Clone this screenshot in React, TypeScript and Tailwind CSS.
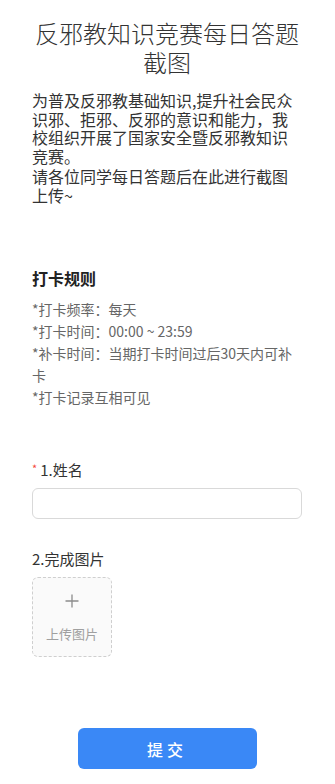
export default function App() {
  return (
    <div
      className="min-h-[784px] w-full bg-white pl-[32px] pr-[33px] pt-[18px] pb-[16px] text-[#333]"
      style={{ fontFamily: '"Noto Sans CJK SC", "Noto Sans", sans-serif' }}
    >
      {/* Title */}
      <h1 className="text-center text-[24px] leading-[29px] font-light text-[#333]">
        反邪教知识竞赛每日答题截图
      </h1>

      {/* Intro */}
      <div className="mt-[15px] text-[16px] leading-[18.5px] text-[#333]">
        <p>为普及反邪教基础知识,提升社会民众识邪、拒邪、反邪的意识和能力，我校组织开展了国家安全暨反邪教知识竞赛。</p>
        <p className="mt-[2px]">请各位同学每日答题后在此进行截图上传~</p>
      </div>

      {/* Rules */}
      <h2 className="mt-[63px] text-[16px] leading-[22px] font-bold text-[#222]">打卡规则</h2>
      <div className="mt-[9px] text-[14px] leading-[22px] text-[#666]">
        <p>*打卡频率：每天</p>
        <p>*打卡时间：00:00 ~ 23:59</p>
        <p>*补卡时间：当期打卡时间过后30天内可补卡</p>
        <p>*打卡记录互相可见</p>
      </div>

      {/* Name field */}
      <div className="mt-[51px] flex items-center text-[15px] leading-[22px] text-[#333]">
        <span className="mr-[3px] -translate-y-[2px] text-[11px] text-[#f5473b]">*</span>
        <span>1.姓名</span>
      </div>
      <input
        type="text"
        className="mt-[7px] block h-[31px] w-full rounded-[6px] border border-[#d9d9d9] px-3 text-[14px] outline-none"
      />

      {/* Image field */}
      <div className="mt-[29px] text-[15px] leading-[22px] text-[#333]">2.完成图片</div>
      <div className="mt-[7px] flex h-[80px] w-[80px] flex-col items-center rounded-[6px] border border-dashed border-[#cfcfcf] bg-[#fafafa] pt-[16px]">
        <svg width="14" height="14" viewBox="0 0 14 14" fill="none" stroke="#8c8c8c" strokeWidth="1.3">
          <path d="M7 0.5v13M0.5 7h13" />
        </svg>
        <span className="mt-[17px] text-[13px] leading-[18px] text-[#a0a0a0]">上传图片</span>
      </div>

      {/* Submit */}
      <div className="mt-[71px] flex justify-center">
        <button className="h-[41px] w-[179px] rounded-[6px] bg-[#3a88f6] text-[16px] font-medium tracking-[4px] text-white">
          提交
        </button>
      </div>
    </div>
  );
}
